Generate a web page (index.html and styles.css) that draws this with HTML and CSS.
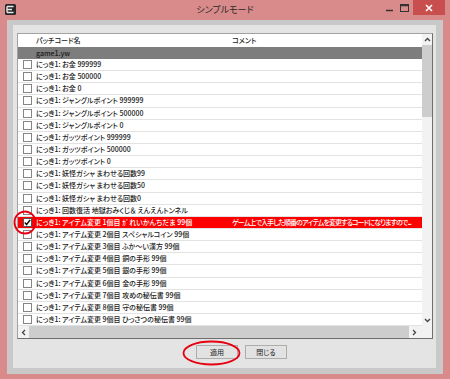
FILE: index.html
```html
<!DOCTYPE html>
<html lang="ja">
<head>
<meta charset="utf-8">
<title>シンプルモード</title>
<link rel="stylesheet" href="styles.css">
</head>
<body>
<div class="window">
  <div class="titlebar">
    <div class="app-icon">
      <svg width="11" height="11" viewBox="0 0 11 11"><rect x="0" y="0" width="11" height="11" rx="1.5" fill="#262626"/><path d="M2 2.5h6.5M2 2.5v6M2 5.5h5M2 8.5h6.5" stroke="#e8e8e8" stroke-width="1.4" fill="none"/></svg>
    </div>
    <div class="title">シンプルモード</div>
    <div class="controls">
      <svg class="ctl" width="16" height="15" viewBox="0 0 16 15"><path d="M5 10.5h7" stroke="#333" stroke-width="1.5"/></svg>
      <svg class="ctl" width="16" height="15" viewBox="0 0 16 15"><rect x="3.5" y="4.5" width="8" height="7" fill="none" stroke="#333" stroke-width="1"/><path d="M3.5 5.5h8" stroke="#333" stroke-width="1.5"/></svg>
      <div class="close"><svg width="8" height="8" viewBox="0 0 8 8"><path d="M1 1l6 6M7 1l-6 6" stroke="#fff" stroke-width="1.6"/></svg></div>
    </div>
  </div>
  <div class="client">
    <div class="panel">
      <div class="list">
        <div class="list-body">
          <div class="row header"><span></span><span>パッチコード名</span><span>コメント</span></div>
          <div class="row group"><span></span><span>game1.yw</span><span></span></div>
          <div class="row"><span class="cb"></span><span class="name">にっき1: お金 999999</span><span></span></div>
          <div class="row"><span class="cb"></span><span class="name">にっき1: お金 500000</span><span></span></div>
          <div class="row"><span class="cb"></span><span class="name">にっき1: お金 0</span><span></span></div>
          <div class="row"><span class="cb"></span><span class="name">にっき1: ジャングルポイント 999999</span><span></span></div>
          <div class="row"><span class="cb"></span><span class="name">にっき1: ジャングルポイント 500000</span><span></span></div>
          <div class="row"><span class="cb"></span><span class="name">にっき1: ジャングルポイント 0</span><span></span></div>
          <div class="row"><span class="cb"></span><span class="name">にっき1: ガッツポイント 999999</span><span></span></div>
          <div class="row"><span class="cb"></span><span class="name">にっき1: ガッツポイント 500000</span><span></span></div>
          <div class="row"><span class="cb"></span><span class="name">にっき1: ガッツポイント 0</span><span></span></div>
          <div class="row"><span class="cb"></span><span class="name">にっき1: 妖怪ガシャ まわせる回数99</span><span></span></div>
          <div class="row"><span class="cb"></span><span class="name">にっき1: 妖怪ガシャ まわせる回数50</span><span></span></div>
          <div class="row"><span class="cb"></span><span class="name">にっき1: 妖怪ガシャ まわせる回数0</span><span></span></div>
          <div class="row"><span class="cb"></span><span class="name">にっき1: 回数復活 地獄おみくじ＆ えんえんトンネル</span><span></span></div>
          <div class="row sel"><span class="cb checked"><svg width="7" height="7" viewBox="0 0 7 7"><path d="M0.8 3.6l1.8 1.9L6.2 0.9" stroke="#111" stroke-width="1.5" fill="none"/></svg></span><span class="name">にっき1: アイテム変更 1個目 ｶﾞれいかんちだま 99個</span><span class="comment">ゲーム上で入手した順番のアイテムを変更するコードになりますので...</span></div>
          <div class="row"><span class="cb"></span><span class="name">にっき1: アイテム変更 2個目 スペシャルコイン 99個</span><span></span></div>
          <div class="row"><span class="cb"></span><span class="name">にっき1: アイテム変更 3個目 ふか～い漢方 99個</span><span></span></div>
          <div class="row"><span class="cb"></span><span class="name">にっき1: アイテム変更 4個目 銅の手形 99個</span><span></span></div>
          <div class="row"><span class="cb"></span><span class="name">にっき1: アイテム変更 5個目 銀の手形 99個</span><span></span></div>
          <div class="row"><span class="cb"></span><span class="name">にっき1: アイテム変更 6個目 金の手形 99個</span><span></span></div>
          <div class="row"><span class="cb"></span><span class="name">にっき1: アイテム変更 7個目 攻めの秘伝書 99個</span><span></span></div>
          <div class="row"><span class="cb"></span><span class="name">にっき1: アイテム変更 8個目 守の秘伝書 99個</span><span></span></div>
          <div class="row"><span class="cb"></span><span class="name">にっき1: アイテム変更 9個目 ひっさつの秘伝書 99個</span><span></span></div>
        </div>
        <div class="vscroll">
          <div class="vs-arrow"><svg width="7" height="5" viewBox="0 0 7 5"><path d="M1 4l2.5-2.5L6 4" stroke="#444" stroke-width="1.3" fill="none"/></svg></div>
          <div class="vs-thumb"></div>
          <div class="vs-track"></div>
          <div class="vs-arrow"><svg width="7" height="5" viewBox="0 0 7 5"><path d="M1 1l2.5 2.5L6 1" stroke="#444" stroke-width="1.3" fill="none"/></svg></div>
        </div>
        <div class="hscroll">
          <div class="hs-arrow"><svg width="5" height="7" viewBox="0 0 5 7"><path d="M4 1L1.5 3.5 4 6" stroke="#444" stroke-width="1.3" fill="none"/></svg></div>
          <div class="hs-thumb"></div>
          <div class="hs-arrow"><svg width="5" height="7" viewBox="0 0 5 7"><path d="M1 1l2.5 2.5L1 6" stroke="#444" stroke-width="1.3" fill="none"/></svg></div>
        </div>
        <div class="corner"></div>
      </div>
      <div class="buttons">
        <button class="btn">適用</button>
        <button class="btn">閉じる</button>
      </div>
    </div>
  </div>
  <svg class="marks" width="450" height="379" viewBox="0 0 450 379">
    <ellipse cx="25" cy="222.5" rx="10.5" ry="11" fill="none" stroke="#e50012" stroke-width="1.8"/>
    <ellipse cx="211.5" cy="353" rx="28" ry="11.5" fill="none" stroke="#e50012" stroke-width="1.8"/>
  </svg>
</div>
</body>
</html>
```
FILE: styles.css
```css
html, body {
  margin: 0;
  padding: 0;
}
body {
  width: 450px;
  height: 379px;
  overflow: hidden;
  background: #d98a8a;
  font-family: "Noto Sans CJK JP", "Noto Sans", sans-serif;
  font-feature-settings: "palt";
  color: #222;
}
.window {
  position: relative;
  width: 450px;
  height: 379px;
  display: flex;
  flex-direction: column;
}
.titlebar {
  height: 20px;
  flex: none;
  display: grid;
  grid-template-columns: 1fr auto 1fr;
  align-items: start;
}
.app-icon {
  margin: 4px 0 0 5px;
  width: 11px;
  height: 11px;
  line-height: 0;
}
.title {
  font-size: 9px;
  line-height: 20px;
  color: #2a2a2a;
  white-space: nowrap;
}
.controls {
  justify-self: end;
  display: flex;
  align-items: flex-start;
  margin-right: 5px;
}
.ctl {
  display: block;
}
.close {
  width: 32px;
  height: 15px;
  background: #c94f4f;
  display: flex;
  align-items: center;
  justify-content: center;
}
.client {
  flex: 1;
  margin: 0 7px 5px 7px;
  background: #c9c9c9;
  padding: 5px 7px 6px 6px;
  display: flex;
}
.panel {
  flex: 1;
  background: #e4e4e4;
  padding: 8px 3px 0 4px;
  display: flex;
  flex-direction: column;
}
.list {
  height: 306px;
  box-sizing: border-box;
  border: 1px solid;
  border-color: #a2a2a2 #6e6e6e #6e6e6e #a2a2a2;
  background: #fff;
  display: grid;
  grid-template-columns: 1fr 10px;
  grid-template-rows: 1fr 12px;
}
.list-body {
  overflow: hidden;
  font-size: 7px;
  font-weight: 500;
}
.row {
  display: grid;
  grid-template-columns: 18px 196px 1fr;
  align-items: center;
  height: 12.15px;
  box-sizing: border-box;
  border-bottom: 1px solid #e2e2e2;
  line-height: 11px;
  white-space: nowrap;
}
.row.header {
  height: 13px;
  border-bottom: none;
}
.row.group {
  height: 12px;
  background: #7d7d7d;
  border-bottom: none;
  color: #1a1a1a;
}
.row.sel {
  background: #ff0000;
  color: #fff;
}
.cb {
  width: 9px;
  height: 9px;
  margin-left: 5px;
  box-sizing: border-box;
  border: 1px solid #858585;
  background: #fff;
  display: flex;
  align-items: center;
  justify-content: center;
}
.cb.checked {
  border-color: #555;
}
.name {
  overflow: hidden;
}
.comment {
  overflow: hidden;
  letter-spacing: -0.9px;
  padding-right: 2px;
}
.vscroll {
  display: flex;
  flex-direction: column;
  background: #f2f2f2;
}
.vs-arrow {
  height: 11px;
  flex: none;
  display: flex;
  align-items: center;
  justify-content: center;
}
.vs-thumb {
  height: 72px;
  flex: none;
  background: #cdcdcd;
}
.vs-track {
  flex: 1;
}
.hscroll {
  display: flex;
  align-items: stretch;
  background: #f2f2f2;
}
.hs-arrow {
  width: 11px;
  flex: none;
  display: flex;
  align-items: center;
  justify-content: center;
}
.hs-thumb {
  width: 380px;
  background: #cdcdcd;
}
.corner {
  background: #f2f2f2;
}
.buttons {
  display: flex;
  gap: 7px;
  margin-top: 6px;
  padding-left: 179px;
}
.btn {
  width: 42px;
  height: 14px;
  padding: 0;
  margin: 0;
  box-sizing: border-box;
  border: 1px solid #adadad;
  background: #e2e2e2;
  font-family: "Noto Sans CJK JP", sans-serif;
  font-feature-settings: "palt";
  font-size: 7px;
  line-height: 12px;
  color: #222;
}
.marks {
  position: absolute;
  top: 0;
  left: 0;
  pointer-events: none;
}
```
